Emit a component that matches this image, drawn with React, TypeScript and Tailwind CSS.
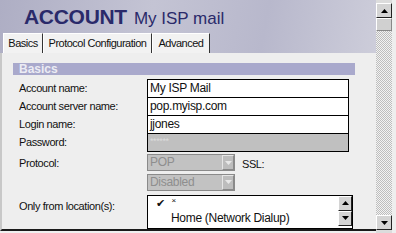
import React from 'react';

const rows = [
  { label: 'Account name:', value: 'My ISP Mail' },
  { label: 'Account server name:', value: 'pop.myisp.com' },
  { label: 'Login name:', value: 'jjones' },
];

const tabs = [
  { name: 'Basics', w: 'w-[40px]' },
  { name: 'Protocol Configuration', w: 'w-[109px]' },
  { name: 'Advanced', w: 'w-[58px]' },
];

function Arrow({ up, color = '#000' }: { up?: boolean; color?: string }) {
  return (
    <svg width="7" height="4" viewBox="0 0 7 4">
      <polygon points={up ? '0,4 7,4 3.5,0' : '0,0 7,0 3.5,4'} fill={color} />
    </svg>
  );
}

function ScrollButton({ up, className = '' }: { up?: boolean; className?: string }) {
  return (
    <div
      className={`flex items-center justify-center bg-[#d4d4d4] border border-t-white border-l-white border-r-[#222] border-b-[#222] ${className}`}
    >
      <Arrow up={up} />
    </div>
  );
}

function Select({ value }: { value: string }) {
  return (
    <div className="flex w-[88px] h-[17px] bg-[#c2c2c2] border border-[#8a8a8a]">
      <span className="flex-1 pl-[2px] text-[12px] leading-[15px] tracking-[-0.3px] text-[#8e8e8e]">{value}</span>
      <div className="w-[12px] flex items-center justify-center bg-[#bdbdbd] border-l border-t border-l-[#e6e6e6] border-t-[#e6e6e6] border-r border-b border-r-[#8a8a8a] border-b-[#8a8a8a]">
        <Arrow color="#e8e8e8" />
      </div>
    </div>
  );
}

export default function App() {
  return (
    <div className="flex w-[396px] h-[233px] overflow-hidden bg-[#f0f0f0] font-['Liberation_Sans',Arial,sans-serif] text-[#111]">
      <div className="w-[376px] flex flex-col pb-[2px]">
        {/* header + tabs */}
        <div className="h-[53px] flex flex-col bg-[linear-gradient(100deg,#aeaec4_0%,#c4c4d4_40%,#b8b8cc_70%,#cdcdda_100%)]">
          <div className="h-[33px] pl-[24px] pt-[5px] flex items-baseline gap-[7px] text-[#2a2a6a]">
            <span className="text-[21px] font-bold leading-[24px] tracking-[-0.3px]">ACCOUNT</span>
            <span className="text-[17px] leading-[24px]">My ISP mail</span>
          </div>
          <div className="flex items-end pl-[3px] h-[20px]">
            {tabs.map((t) => (
              <div
                key={t.name}
                className={`h-[20px] ${t.w} flex items-center justify-center whitespace-nowrap bg-[#f2f2f2] border-t border-l border-white border-r border-r-[#333] text-[11px] tracking-[-0.5px]`}
              >
                {t.name}
              </div>
            ))}
          </div>
        </div>

        {/* panel */}
        <div className="flex-1 flex flex-col bg-[#eeeeee] border-l-2 border-l-[#c8c8c8] border-b-2 border-b-[#1a1a1a] pl-[11px] pt-[10px] text-[11px] tracking-[-0.4px]">
          <div className="w-[342px] h-[12px] bg-[#a9a9cc] pl-[6px] text-[12px] leading-[12px] font-bold tracking-normal text-[#ececf4]">
            Basics
          </div>

          <div className="mt-[4px] flex flex-col">
            {rows.map((r, i) => (
              <div key={r.label} className={`flex items-center ${i > 0 ? '-mt-px' : ''}`}>
                <span className="w-[134px] pl-[6px]">{r.label}</span>
                <div className="w-[202px] h-[19px] bg-white border border-black pl-[2px] text-[12px] leading-[17px] tracking-[-0.3px]">
                  {r.value}
                </div>
              </div>
            ))}
            <div className="flex items-center -mt-px">
              <span className="w-[134px] pl-[6px]">Password:</span>
              <div className="w-[202px] h-[19px] bg-[#c0c0c0] border border-black pl-[2px] text-[9px] leading-[15px] text-[#dcdcdc]">
                ******
              </div>
            </div>
          </div>

          <div className="mt-[1px] flex items-center">
            <span className="w-[134px] pl-[6px]">Protocol:</span>
            <Select value="POP" />
            <span className="ml-[7px] pt-[3px]">SSL:</span>
          </div>
          <div className="mt-[1px] flex items-center">
            <span className="w-[134px]" />
            <Select value="Disabled" />
          </div>

          <div className="mt-[4px] flex items-start">
            <span className="w-[134px] pl-[6px] pt-[3px]">Only from location(s):</span>
            <div className="w-[206px] h-[34px] flex bg-white border border-black">
              <div className="flex-1 flex flex-col">
                <div className="h-[15px] flex items-start pl-[8px]">
                  <span className="text-[11px] leading-[14px]">✔</span>
                  <span className="ml-[7px] text-[8px] leading-[9px]">×</span>
                </div>
                <div className="pl-[23px] text-[12px] leading-[15px] tracking-[-0.3px]">Home (Network Dialup)</div>
              </div>
              <div className="w-[14px] flex flex-col">
                <ScrollButton up className="h-[15px]" />
                <ScrollButton className="h-[15px]" />
              </div>
            </div>
          </div>
        </div>
      </div>

      {/* window scrollbar */}
      <div className="w-[20px] flex">
        <div className="w-[16px] flex flex-col pt-[3px] pb-[3px] bg-[#dcdcdc]">
          <ScrollButton up className="h-[15px]" />
          <div className="h-[13px] bg-[#d0d0d0] border border-t-white border-l-white border-r-[#888] border-b-[#888]" />
          <div className="flex-1 bg-[repeating-conic-gradient(#bdbdbd_0%_25%,#f2f2f2_0%_50%)] bg-[length:2px_2px]" />
          <ScrollButton className="h-[15px]" />
        </div>
        <div className="flex-1 bg-[#eeeeee]" />
      </div>
    </div>
  );
}
